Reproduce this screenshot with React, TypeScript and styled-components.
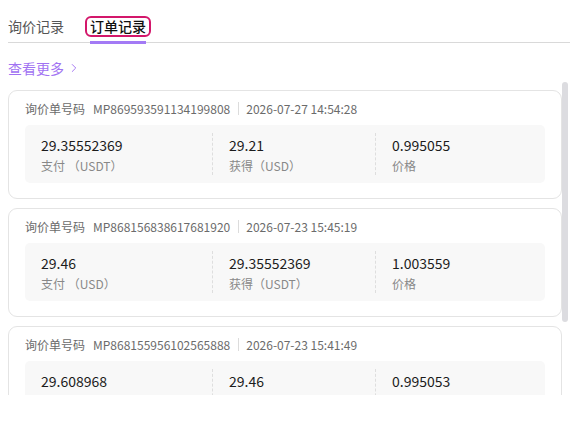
import styled, { createGlobalStyle } from "styled-components";
import { ChevronRight } from "lucide-react";

interface Order {
    id: string;
    time: string;
    pay: string;
    payUnit: string;
    get: string;
    getUnit: string;
    price: string;
}

const orders: Order[] = [
    { id: "MP869593591134199808", time: "2026-07-27 14:54:28", pay: "29.35552369", payUnit: "USDT", get: "29.21", getUnit: "USD", price: "0.995055" },
    { id: "MP868156838617681920", time: "2026-07-23 15:45:19", pay: "29.46", payUnit: "USD", get: "29.35552369", getUnit: "USDT", price: "1.003559" },
    { id: "MP868155956102565888", time: "2026-07-23 15:41:49", pay: "29.608968", payUnit: "USDT", get: "29.46", getUnit: "USD", price: "0.995053" },
];

const App = () => {
    return (
        <>
            <GlobalStyle />
            <Page>
                <TabBar>
                    <Tab>询价记录</Tab>
                    <Tab $active>
                        <TabLabel $active>订单记录</TabLabel>
                    </Tab>
                </TabBar>
                <MoreLink href="#">
                    查看更多
                    <ChevronRight size={14} strokeWidth={1.6} />
                </MoreLink>
                <ScrollArea>
                    <List>
                        {orders.map((o) => (
                            <Card key={o.id}>
                                <CardHeader>
                                    <span>询价单号码</span>
                                    <OrderId>{o.id}</OrderId>
                                    <Sep />
                                    <span>{o.time}</span>
                                </CardHeader>
                                <Stats>
                                    <Stat>
                                        <Value>{o.pay}</Value>
                                        <Label>支付 （{o.payUnit}）</Label>
                                    </Stat>
                                    <Stat>
                                        <Value>{o.get}</Value>
                                        <Label>获得（{o.getUnit}）</Label>
                                    </Stat>
                                    <Stat>
                                        <Value>{o.price}</Value>
                                        <Label>价格</Label>
                                    </Stat>
                                </Stats>
                            </Card>
                        ))}
                    </List>
                    <ScrollTrack>
                        <Thumb $size={240} />
                    </ScrollTrack>
                </ScrollArea>
            </Page>
        </>
    );
};

export default App;

const GlobalStyle = createGlobalStyle`
    body {
        margin: 8px;
        background: #fff;
        font-family: "Noto Sans CJK SC", "Noto Sans", sans-serif;
    }
`

const Page = styled.div`
    display: flex;
    flex-direction: column;
`

const TabBar = styled.div`
    display: flex;
    align-items: flex-end;
    gap: 21px;
    height: 35px;
    border-bottom: 1px solid #d9d9d9;
    box-sizing: border-box;
    padding-bottom: 7px;
`

const Tab = styled.div<{ $active?: boolean }>`
    position: relative;
    font-size: 14px;
    line-height: 17px;
    color: ${(p) => (p.$active ? "#111" : "#555")};
    font-weight: ${(p) => (p.$active ? 500 : 400)};
    cursor: pointer;
    &::after {
        content: "";
        display: ${(p) => (p.$active ? "block" : "none")};
        position: absolute;
        left: 5px;
        right: 5px;
        bottom: -9px;
        height: 3px;
        background: #a37af5;
    }
`

const TabLabel = styled.span<{ $active?: boolean }>`
    display: inline-block;
    padding: 0 3px;
    margin-bottom: -2px;
    border: 2px solid ${(p) => (p.$active ? "#d3176b" : "transparent")};
    border-radius: 6px;
`

const MoreLink = styled.a`
    display: flex;
    align-items: center;
    gap: 3px;
    margin-top: 15px;
    font-size: 14px;
    line-height: 20px;
    color: #a172f2;
    text-decoration: none;
    align-self: flex-start;
`

const ScrollArea = styled.div`
    margin-top: 4px;
    height: 313px;
    display: flex;
`

const List = styled.div`
    flex: 1;
    overflow: hidden;
    display: flex;
    flex-direction: column;
    gap: 9px;
    padding-top: 8px;
`

const ScrollTrack = styled.div`
    width: 8px;
    padding-right: 2px;
    box-sizing: border-box;
`

const Thumb = styled.div<{ $size: number }>`
    height: ${(p) => p.$size}px;
    border-radius: 3px;
    background: #dcdce0;
`

const Card = styled.div`
    flex-shrink: 0;
    border: 1px solid #e4e4e4;
    border-radius: 9px;
    padding: 9px 16px 15px;
    background: #fff;
`

const CardHeader = styled.div`
    display: flex;
    align-items: center;
    font-size: 12px;
    line-height: 17px;
    color: #6b6b6b;
`

const OrderId = styled.span`
    margin-left: 8px;
`

const Sep = styled.span`
    width: 1px;
    height: 13px;
    background: #dcdcdc;
    margin: 0 7px 0 8px;
`

const Stats = styled.div`
    margin-top: 8px;
    display: grid;
    grid-template-columns: 187fr 163fr 170fr;
    padding: 8px 0;
    background: #f8f8f8;
    border-radius: 5px;
`

const Stat = styled.div`
    padding: 2px 16px 1px;
    & + & {
        border-left: 1px dashed #dedede;
    }
`

const Value = styled.div`
    font-size: 14px;
    line-height: 20px;
    color: #1c1c1c;
`

const Label = styled.div`
    margin-top: 2px;
    font-size: 12px;
    line-height: 17px;
    color: #888;
`
